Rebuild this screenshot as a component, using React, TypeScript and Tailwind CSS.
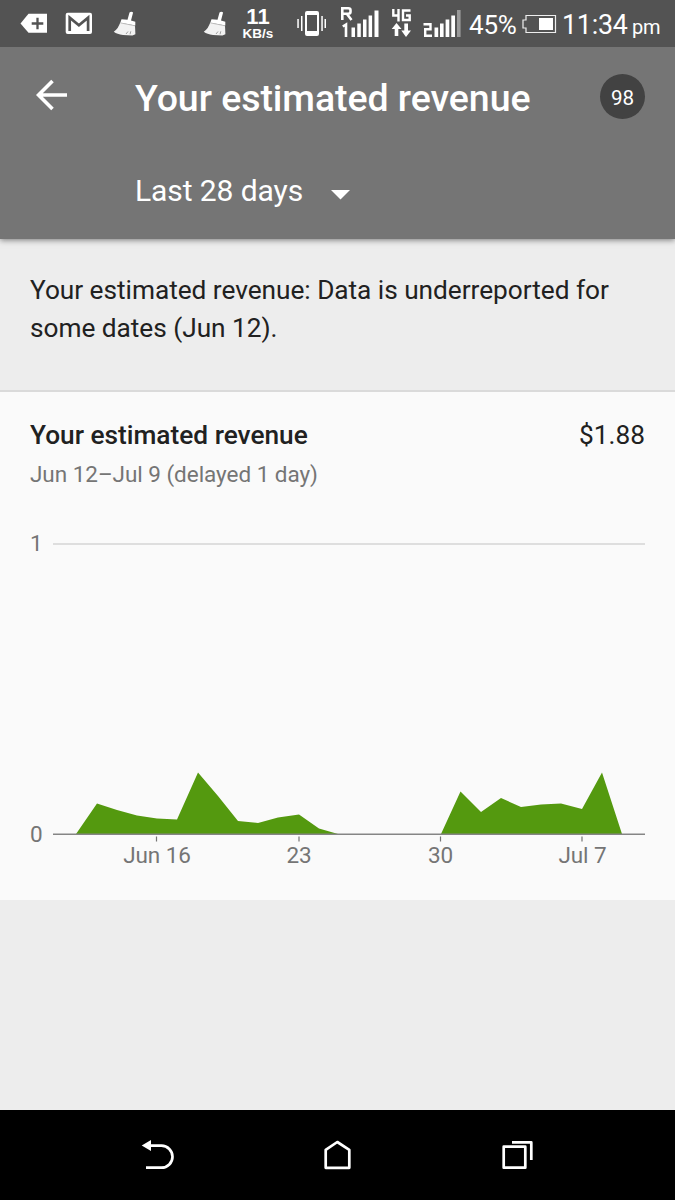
import type { ReactNode } from "react";

const days = [
  [76, 834], [97, 803.5], [117, 810], [137, 815.5], [157, 818.5], [177, 819.5],
  [198, 772.5], [218, 796], [238, 821], [258, 823], [278, 817.5], [299, 814.5],
  [319, 828.5], [338, 834], [441, 834], [460.5, 791.5], [481, 812], [501, 798],
  [521, 807], [541, 804.5], [561, 803.5], [582, 809], [602, 772.5], [622, 834],
];

function Broom() {
  return (
    <svg width="24" height="26" viewBox="0 0 24 26" className="block">
      <path d="M16.500 1.500q1.800-1.300 3.600 0L18 9.500l4.300 1.300v3.600L7.300 11.800l1.200-3.600 6 .6z" fill="#fff" />
      <path d="M7.300 11.500l14.700 3 .4 8.800-3 1.300-9.400-.6C6 23.500 3 22.500.8 20.800c3-2 5-5.300 6.500-9.300z" fill="#f2f2f2" />
      <path d="M13 23l2-2.500M17 23.300l.8-3" stroke="#8a8a8a" strokeWidth=".8" fill="none" />
      <path d="M7.400 11.900l14.600 2.900" stroke="#aaa" strokeWidth=".7" />
    </svg>
  );
}

function Item({ className, children }: { className: string; children: ReactNode }) {
  return <div className={`shrink-0 whitespace-nowrap ${className}`}>{children}</div>;
}

function StatusBar() {
  return (
    <div className="relative z-10 flex h-[47px] items-start bg-[#535353] text-white">
      <Item className="ml-[20px] mt-[13px] w-[28px]">
        <svg width="28" height="21" viewBox="0 0 28 21">
          <path d="M.5 10.500L8.500.8H27v19H8.500z" fill="#fff" />
          <path d="M17.500 4.700v11.600M11.700 10.500h11.600" stroke="#535353" strokeWidth="2.300" />
        </svg>
      </Item>
      <Item className="ml-[17px] mt-[12px] w-[28px]">
        <svg width="28" height="23" viewBox="0 0 28 23">
          <rect x=".7" y=".8" width="26.300" height="21.200" rx="2" fill="#fff" />
          <path d="M4.700 19V5.600l9.200 7.600 9.200-7.600V19" stroke="#535353" strokeWidth="2.700" fill="none" />
        </svg>
      </Item>
      <Item className="ml-[20px] mt-[11px] w-[24px]"><Broom /></Item>
      <Item className="ml-[66px] mt-[11px] w-[24px]"><Broom /></Item>
      <Item className="ml-[14px] mt-[7px] w-[34px] text-center font-['Liberation_Sans'] font-bold">
        <div className="text-[22px] leading-[20px]">11</div>
        <div className="text-[13.500px] leading-[14px]">KB/s</div>
      </Item>
      <Item className="ml-[22px] mt-[10px] w-[30px]">
        <svg width="30" height="27" viewBox="0 0 30 27" fill="#fff">
          <path d="M10 1h10a2 2 0 0 1 2 2v21a2 2 0 0 1-2 2H10a2 2 0 0 1-2-2V3a2 2 0 0 1 2-2zm0 4v16h10V5z" fillRule="evenodd" />
          <path d="M4 6h1.500v15H4zM.3 9h1.500v9H.3zM24.300 6h1.500v15h-1.500zM27.500 9H29v9h-1.500z" />
        </svg>
      </Item>
      <Item className="ml-[13px] mt-[6px] w-[40px]">
        <svg width="40" height="32" viewBox="0 0 40 32">
          <g stroke="#fff" strokeWidth="2.600" fill="none">
            <path d="M2.300 14V2.300h6q2.200 0 2.200 2v1.500q0 2-2.200 2h-6M7 8l4.500 6" />
            <path d="M2.800 20.500l3.200-2v12.500" />
          </g>
          <path d="M11.500 21.500h3.500V31h-3.500zM17.300 17.500h3.500V31h-3.500zM23 13.500h3.500V31H23zM28.600 9.500h3.500V31h-3.500zM34.500 4.500h4V31h-4z" fill="#fff" />
        </svg>
      </Item>
      <Item className="ml-[11px] mt-[8px] w-[21px]">
        <svg width="21" height="30" viewBox="0 0 21 30">
          <path d="M2.300 1v6.500h6M7.500 1v12.500M19.500 2.500h-7.500v9.500h6.700V7.500H15" stroke="#fff" strokeWidth="2.400" fill="none" />
          <path d="M5.500 15l5 6H7.300v7H3.700v-7H.7zM15 29l-4.700-6.500h3v-7H17v7h3z" fill="#fff" />
        </svg>
      </Item>
      <Item className="ml-[10px] mt-[8px] w-[40px]">
        <svg width="40" height="30" viewBox="0 0 40 30">
          <path d="M1.500 16.200h7v5H3.200v6.600H10" stroke="#fff" strokeWidth="2.400" fill="none" />
          <path d="M12.500 19.500h3.700V29h-3.700zM18 15.500h3.600V29H18zM23.600 11.500h3.700V29h-3.700zM29.300 7.500H33V29h-3.700z" fill="#fff" />
          <path d="M35 2h3.600v27H35z" fill="#999" />
        </svg>
      </Item>
      <Item className="ml-[7px] mt-[10px] w-[50px] text-[26px] leading-[30px] tracking-[-0.2px]">45%</Item>
      <Item className="ml-[3px] mt-[14px] w-[35px]">
        <svg width="35" height="20" viewBox="0 0 35 20">
          <path d="M4 1.500h29.500v17H4V14H1V6h3z" stroke="#eee" strokeWidth="1.200" fill="none" />
          <path d="M17 4h14v12H17z" fill="#fff" />
        </svg>
      </Item>
      <Item className="ml-[5px] mt-[10px] w-[70px] text-[26.800px] leading-[30px] tracking-[-0.2px]">11:34</Item>
      <Item className="mt-[12px] text-[20px] leading-[30px] tracking-[-0.300px]">pm</Item>
    </div>
  );
}

function Header() {
  return (
    <div className="relative h-[192px] bg-[#757575] text-white shadow-[0_1px_6px_rgba(0,0,0,0.5)]">
      <div className="flex h-[102px] items-center pl-[36px] pr-[30px]">
        <svg width="32" height="32" viewBox="0 0 32 32" className="-mt-[6px]">
          <path d="M16.500 2L2.500 16l14 14M2.500 16H31" stroke="#fff" strokeWidth="3.600" fill="none" />
        </svg>
        <h1 className="ml-[67px] text-[37.500px] font-medium leading-[44px] tracking-[-0.060px]">Your estimated revenue</h1>
        <div className="ml-auto -mt-[3px] flex size-[45px] items-center justify-center rounded-full bg-[#424242] pt-[3px] text-[20.600px]">
          98
        </div>
      </div>
      <div className="flex items-center pl-[135px] pt-[24px]">
        <span className="text-[30px] leading-[36px] tracking-[-0.080px]">Last 28 days</span>
        <svg width="20" height="10" viewBox="0 0 20 10" className="ml-[28px] mt-[8px]">
          <path d="M0 0h19L9.500 9.500z" fill="#fff" />
        </svg>
      </div>
    </div>
  );
}

function Chart() {
  const area = days.map(([x, y]) => `${x},${y}`).join(" ");
  return (
    <svg width="675" height="380" viewBox="0 520 675 380" className="block" fill="#757575" fontSize="22.5">
      <path d="M53 544h592" stroke="#dedede" strokeWidth="2" />
      <polygon points={area} fill="#54990f" />
      <path d="M53 834.300h592" stroke="#858585" strokeWidth="1.600" />
      <path d="M156.500 836.500v5M299 836.500v5M440.500 836.500v5M582 836.500v5" stroke="#757575" strokeWidth="1.200" />
      <text x="30" y="551">1</text>
      <text x="30" y="842">0</text>
      <g textAnchor="middle" letterSpacing="-0.1">
        <text x="157" y="862.5">Jun 16</text>
        <text x="299" y="862.5">23</text>
        <text x="440.5" y="862.5">30</text>
        <text x="582.5" y="862.5">Jul 7</text>
      </g>
    </svg>
  );
}

function NavBar() {
  return (
    <div className="mt-auto flex h-[90px] items-center gap-[146px] bg-black pl-[141px]">
      <svg width="34" height="32" viewBox="0 0 34 32" fill="none">
        <path d="M9 6.700h11.500a10.500 10.500 0 0 1 0 22H5" stroke="#fff" strokeWidth="2.700" />
        <path d="M.7 6.500L10 1v11z" fill="#fff" />
      </svg>
      <svg width="34" height="32" viewBox="0 0 34 32" fill="none" stroke="#fff" strokeWidth="2.700" strokeLinejoin="round">
        <path d="M4.700 28.800v-18L16.300 3l12 7.800v18z" />
      </svg>
      <svg width="34" height="32" viewBox="0 0 34 32" fill="none" stroke="#fff" strokeWidth="2.700">
        <path d="M2.700 7.700h21.600v21H2.700zM11 3.400h19.300v17.600" strokeLinejoin="round" />
      </svg>
    </div>
  );
}

export default function App() {
  return (
    <div className="flex h-[1200px] w-[675px] flex-col overflow-hidden bg-[#ededed] font-[Roboto,sans-serif] text-[#212121]">
      <StatusBar />
      <Header />
      <p className="h-[151px] px-[30px] pt-[32px] text-[26.250px] leading-[38px] tracking-[-0.035px]">
        Your estimated revenue: Data is underreported for some dates (Jun 12).
      </p>
      <section className="h-[510px] border-t-2 border-[#dadada] bg-[#fafafa]">
        <div className="h-[128px] px-[30px] pt-[27px]">
          <div className="flex justify-between text-[26.250px] leading-[32px]">
            <h2 className="font-medium">Your estimated revenue</h2>
            <span>$1.88</span>
          </div>
          <div className="mt-[9px] text-[22.500px] leading-[28px] tracking-[-0.040px] text-[#757575]">Jun 12–Jul 9 (delayed 1 day)</div>
        </div>
        <Chart />
      </section>
      <NavBar />
    </div>
  );
}
